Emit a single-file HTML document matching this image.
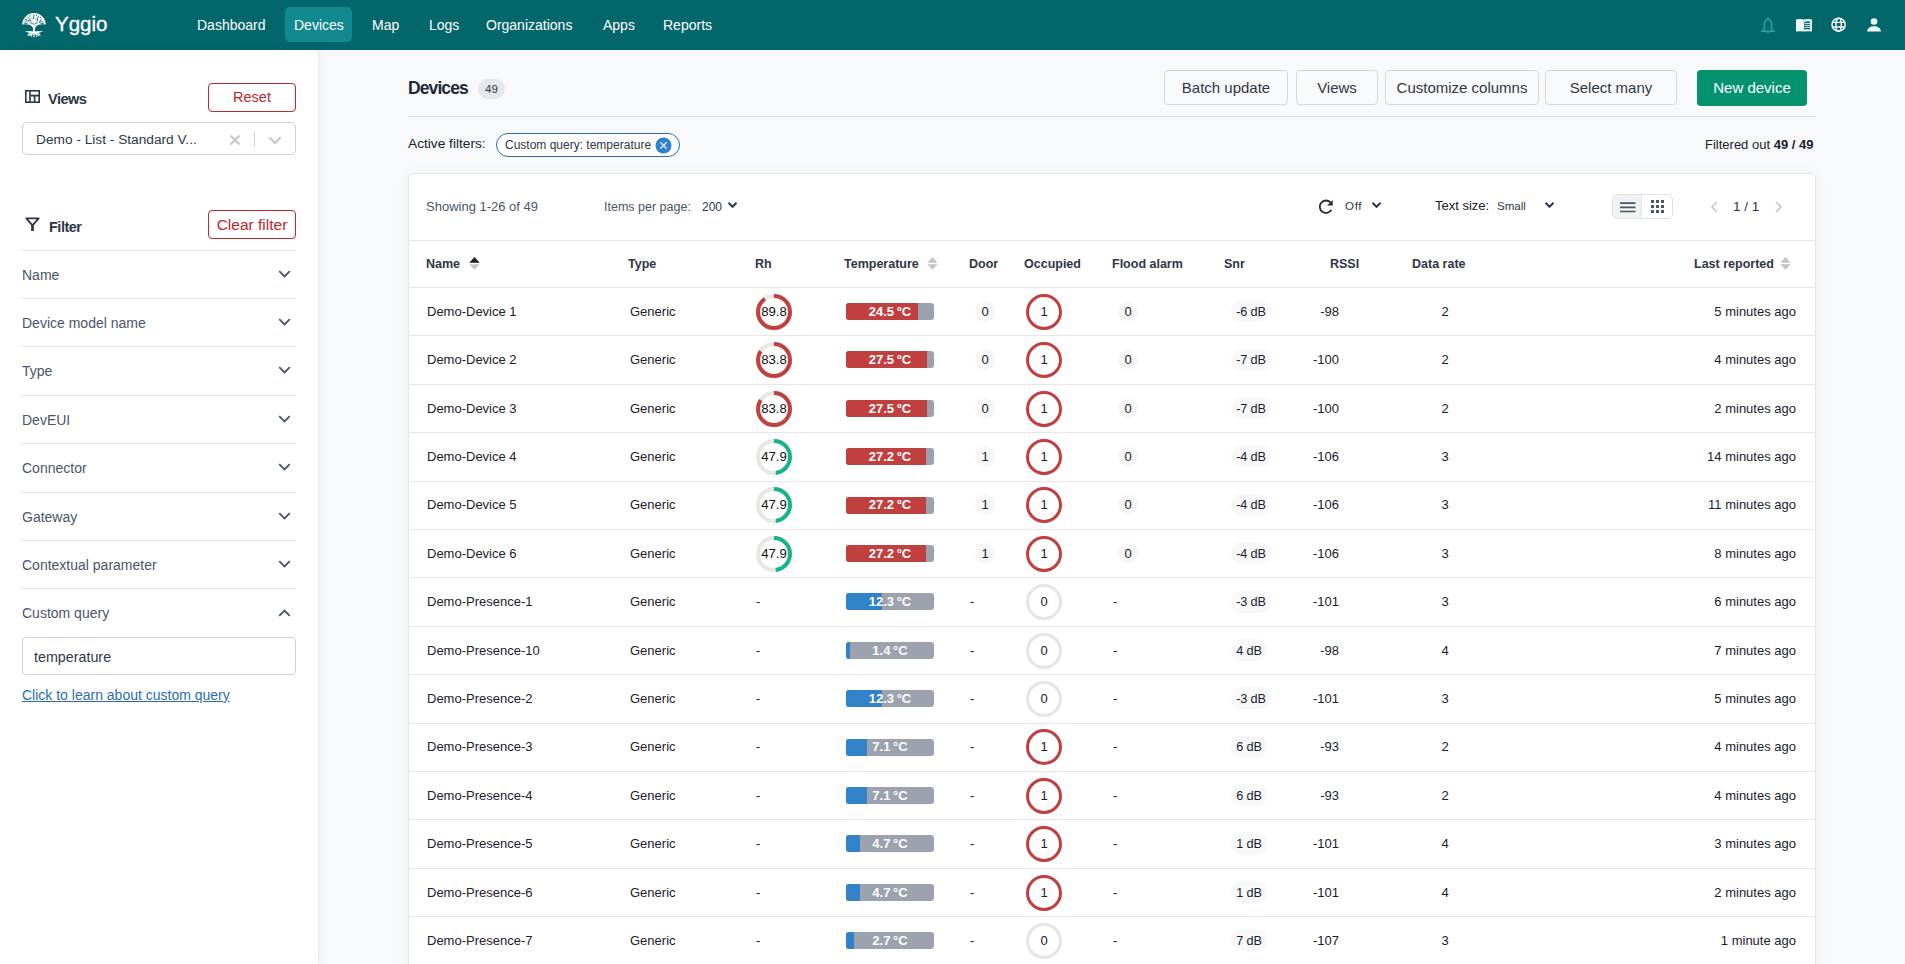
<!DOCTYPE html><html><head><meta charset="utf-8"><style>
*{box-sizing:border-box;margin:0;padding:0}
html,body{width:1905px;height:964px;overflow:hidden;font-family:"Liberation Sans",sans-serif;background:#f8f9fb;color:#1a202c}
.abs{position:absolute}
.t{position:absolute;white-space:nowrap}
#hdr{position:absolute;left:0;top:0;width:1905px;height:50px;background:#03666b}
.nav{position:absolute;top:17px;height:16px;line-height:16px;font-size:14px;color:#fff;white-space:nowrap}
.navact{position:absolute;left:285px;top:7px;width:67px;height:35px;background:#12898e;border-radius:5px}
#side{position:absolute;left:0;top:50px;width:319px;height:914px;background:#fff;border-right:1px solid #e8eaed;box-shadow:3px 0 10px rgba(0,0,0,.035)}
.btnred{position:absolute;left:208px;width:88px;height:28.5px;border:1.4px solid #b52a2a;border-radius:4px;color:#b52a2a;font-size:14.5px;text-align:center;line-height:27px;background:#fff;white-space:nowrap}
.fl{position:absolute;left:22px;width:274px;height:1px;background:#e2e5ea}
.fi{position:absolute;left:22px;font-size:14px;color:#4a5568;white-space:nowrap;line-height:16px}
.wbtn{position:absolute;top:70px;height:35px;border:1px solid #d3d7de;border-radius:4px;background:#f9fafb;font-size:15px;color:#2d3748;text-align:center;line-height:33px;white-space:nowrap}
#card{position:absolute;left:408px;top:173px;width:1408px;height:830px;background:#fff;border:1px solid #e3e5e9;border-radius:6px;box-shadow:0 0 14px rgba(0,0,0,.045)}
.th{position:absolute;top:256px;font-size:12.5px;font-weight:bold;color:#2d3748;white-space:nowrap;line-height:16px}
.rl{position:absolute;left:409px;width:1406px;height:1px;background:#e6e8ec}
.c{position:absolute;font-size:13px;color:#1a202c;white-space:nowrap;line-height:16px}
</style></head><body>
<div id="hdr">
<svg class="abs" style="left:21px;top:12px" width="26" height="26" viewBox="0 0 26 26"><g fill="#fff">
<path d="M1.2 12.6 A11.8 11.6 0 0 1 24.8 12.6 Q21 11.6 17.5 12.8 Q15.5 13.6 14.6 15 L11.4 15 Q10.5 13.6 8.5 12.8 Q5 11.6 1.2 12.6 Z"/>
<path d="M11.2 14 Q12.4 16.5 12 19.6 L10.8 20.8 L15.2 20.8 L14 19.6 Q13.6 16.5 14.8 14 Z"/>
<path d="M3.6 19.4 Q8.5 18.8 13 19.4 Q17.5 18.8 22.4 19.4 Q18 20.9 13 21.4 Q8 20.9 3.6 19.4 Z"/>
</g><g fill="none" stroke="#fff" stroke-width="1.1"><path d="M12.2 20.5 L9.8 24.6 M13 20.5 L13 25.2 M13.8 20.5 L16.2 24.6 M9 20.5 L6.6 23.6 M17 20.5 L19.4 23.6 M11 21 L8 23.6 M15 21 L18 23.6"/>
</g><g fill="none" stroke="#03666b" stroke-width="0.9">
<path d="M4 10 Q6 8 8.5 8.6 M6.5 5 Q9 6.5 10 9.5 M13 2.5 L12.6 7 M17.5 4.2 Q16 7 16.3 9.5 M20.5 7 Q18.5 8.6 19 11 M9.5 11.2 Q11.5 10 12.5 12.5 M16.5 11.2 Q14.5 10 13.5 12.5 M3 12 Q5.5 10.8 6.5 11.7 M23 12 Q20.5 10.8 19.5 11.7"/>
</g><g fill="#03666b"><circle cx="5" cy="7.5" r="0.7"/><circle cx="9" cy="4" r="0.7"/><circle cx="15.5" cy="3.2" r="0.6"/><circle cx="21" cy="9.5" r="0.7"/><circle cx="8" cy="10" r="0.6"/><circle cx="18" cy="10" r="0.6"/><circle cx="11" cy="6.5" r="0.6"/><circle cx="15" cy="7" r="0.6"/><circle cx="3" cy="10" r="0.5"/><circle cx="19.5" cy="5.5" r="0.6"/>
</g></svg>
<div class="t" style="left:55px;top:11px;font-size:20.5px;line-height:26px;color:#fff;-webkit-text-stroke:0.35px #fff">Yggio</div>
<div class="navact"></div>
<div class="nav" style="left:197px">Dashboard</div>
<div class="nav" style="left:294px">Devices</div>
<div class="nav" style="left:372px">Map</div>
<div class="nav" style="left:429px">Logs</div>
<div class="nav" style="left:486px">Organizations</div>
<div class="nav" style="left:603px">Apps</div>
<div class="nav" style="left:663px">Reports</div>
<svg class="abs" style="left:1760px;top:16px" width="16" height="18" viewBox="0 0 16 18">
<path fill="none" stroke="#23a0a6" stroke-width="1.6" d="M8 3.1 Q4.4 3.4 4.4 8.2 L4.4 13.5 L2.4 15.2 L13.6 15.2 L11.6 13.5 L11.6 8.2 Q11.6 3.4 8 3.1 Z"/>
<path fill="#23a0a6" d="M7.15 1.2h1.7v2.1h-1.7z M6.7 16.2h2.6v1.1h-2.6z"/></svg>
<svg class="abs" style="left:1795px;top:18px" width="18" height="15" viewBox="0 0 18 15">
<path fill="#eefafa" d="M1 1.5 Q4.9 0.5 8.9 1.5 Q12.9 0.5 17 1.5 L17 13.6 Q12.9 12.7 8.9 13.6 Q4.9 12.7 1 13.6 Z"/>
<path fill="#03666b" d="M9.1 11.6 L9.1 4.1 Q12 2.7 15.1 3.5 L15.1 11.6 Q12 11 9.1 11.6 Z"/>
<path fill="none" stroke="#eefafa" stroke-width="0.9" d="M9.6 5.4 H15.1 M9.6 7.4 H15.1 M9.6 9.4 H15.1"/></svg>
<svg class="abs" style="left:1830px;top:16px" width="17" height="17" viewBox="0 0 17 17">
<g fill="none" stroke="#fff" stroke-width="1.4"><circle cx="8.6" cy="8.7" r="6.6"/><ellipse cx="8.6" cy="8.7" rx="2.7" ry="6.6"/><path d="M2.2 6.4H15M2.2 11H15"/></g></svg>
<svg class="abs" style="left:1866px;top:17px" width="16" height="16" viewBox="0 0 16 16">
<g fill="#eefafa"><circle cx="8" cy="4.5" r="3.3"/><path d="M1 14.6 Q1.6 9.4 8 9.3 Q14.4 9.4 15 14.6 Z"/></g></svg>
</div>
<div id="side"></div>
<svg class="abs" style="left:25px;top:90px" width="15" height="13" viewBox="0 0 15 13">
<g fill="none" stroke="#2d3748" stroke-width="1.6"><rect x="0.8" y="0.8" width="13.4" height="11.4"/><path d="M5 0.8V12.2M5 5.6H14.2M9.6 5.6V12.2"/></g></svg>
<div class="t" style="left:48px;top:90.5px;font-size:14.5px;font-weight:bold;color:#2d3748;line-height:16px;letter-spacing:-0.5px">Views</div>
<div class="btnred" style="top:83px">Reset</div>
<div class="abs" style="left:22px;top:122px;width:274px;height:33px;border:1px solid #cdd2d9;border-radius:5px;background:#fff"></div>
<div class="t" style="left:36px;top:132px;font-size:13.7px;color:#2d3748;line-height:16px">Demo - List - Standard V...</div>
<svg class="abs" style="left:229px;top:134px" width="12" height="12" viewBox="0 0 12 12"><path d="M1.5 1.5L10.5 10.5M10.5 1.5L1.5 10.5" stroke="#c7c7c7" stroke-width="2.2"/></svg>
<div class="abs" style="left:254px;top:132px;width:1px;height:15px;background:#cfcfcf"></div>
<svg class="abs" style="left:268px;top:136px" width="14" height="9" viewBox="0 0 14 9"><path d="M1.5 1.5L7 7L12.5 1.5" fill="none" stroke="#c7c7c7" stroke-width="2.2"/></svg>
<svg class="abs" style="left:25px;top:216px" width="15" height="16" viewBox="0 0 15 16"><path d="M1.3 2.3H13.7L7.5 9.4Z" fill="none" stroke="#2d3748" stroke-width="1.8" stroke-linejoin="round"/><rect x="6.15" y="9" width="2.7" height="6" fill="#2d3748"/></svg>
<div class="t" style="left:49px;top:219px;font-size:14.5px;font-weight:bold;color:#2d3748;line-height:16px;letter-spacing:-0.5px">Filter</div>
<div class="btnred" style="top:210px;font-size:15.5px">Clear filter</div>
<div class="fl" style="top:250px"></div>
<div class="fi" style="top:267px">Name</div>
<svg class="abs" style="left:278px;top:270px" width="13" height="8" viewBox="0 0 13 8"><path d="M1.2 1.2L6.5 6.5L11.8 1.2" fill="none" stroke="#4a5568" stroke-width="1.8"/></svg>
<div class="fl" style="top:298px"></div>
<div class="fi" style="top:315px">Device model name</div>
<svg class="abs" style="left:278px;top:318px" width="13" height="8" viewBox="0 0 13 8"><path d="M1.2 1.2L6.5 6.5L11.8 1.2" fill="none" stroke="#4a5568" stroke-width="1.8"/></svg>
<div class="fl" style="top:346px"></div>
<div class="fi" style="top:363px">Type</div>
<svg class="abs" style="left:278px;top:366px" width="13" height="8" viewBox="0 0 13 8"><path d="M1.2 1.2L6.5 6.5L11.8 1.2" fill="none" stroke="#4a5568" stroke-width="1.8"/></svg>
<div class="fl" style="top:395px"></div>
<div class="fi" style="top:412px">DevEUI</div>
<svg class="abs" style="left:278px;top:415px" width="13" height="8" viewBox="0 0 13 8"><path d="M1.2 1.2L6.5 6.5L11.8 1.2" fill="none" stroke="#4a5568" stroke-width="1.8"/></svg>
<div class="fl" style="top:443px"></div>
<div class="fi" style="top:460px">Connector</div>
<svg class="abs" style="left:278px;top:463px" width="13" height="8" viewBox="0 0 13 8"><path d="M1.2 1.2L6.5 6.5L11.8 1.2" fill="none" stroke="#4a5568" stroke-width="1.8"/></svg>
<div class="fl" style="top:492px"></div>
<div class="fi" style="top:509px">Gateway</div>
<svg class="abs" style="left:278px;top:512px" width="13" height="8" viewBox="0 0 13 8"><path d="M1.2 1.2L6.5 6.5L11.8 1.2" fill="none" stroke="#4a5568" stroke-width="1.8"/></svg>
<div class="fl" style="top:540px"></div>
<div class="fi" style="top:557px">Contextual parameter</div>
<svg class="abs" style="left:278px;top:560px" width="13" height="8" viewBox="0 0 13 8"><path d="M1.2 1.2L6.5 6.5L11.8 1.2" fill="none" stroke="#4a5568" stroke-width="1.8"/></svg>
<div class="fl" style="top:588px"></div>
<div class="fi" style="top:605px">Custom query</div>
<svg class="abs" style="left:278px;top:609px" width="13" height="8" viewBox="0 0 13 8"><path d="M1.2 6.8L6.5 1.5L11.8 6.8" fill="none" stroke="#4a5568" stroke-width="1.8"/></svg>
<div class="abs" style="left:22px;top:637px;width:274px;height:38px;border:1px solid #cdd2d9;border-radius:4px;background:#fff"></div>
<div class="t" style="left:34px;top:649px;font-size:14.3px;color:#2d3748;line-height:16px">temperature</div>
<div class="t" style="left:22px;top:687px;font-size:14px;color:#2b6cb0;line-height:16px;text-decoration:underline">Click to learn about custom query</div>
<div class="t" style="left:408px;top:78.5px;font-size:17.5px;font-weight:bold;color:#1f2937;line-height:18px;letter-spacing:-0.9px">Devices</div>
<div class="abs" style="left:478px;top:79px;width:27px;height:20px;border-radius:10px;background:#e6e7ea;font-size:11.5px;color:#2d3748;text-align:center;line-height:20px">49</div>
<div class="wbtn" style="left:1164px;width:124px">Batch update</div>
<div class="wbtn" style="left:1296px;width:82px">Views</div>
<div class="wbtn" style="left:1385px;width:154px">Customize columns</div>
<div class="wbtn" style="left:1545px;width:132px">Select many</div>
<div class="abs" style="left:1697px;top:70px;width:110px;height:36px;background:#05926f;border-radius:4px;color:#fff;font-size:15px;text-align:center;line-height:35px">New device</div>
<div class="abs" style="left:408px;top:116px;width:1408px;height:1px;background:#d5d9e0"></div>
<div class="t" style="left:408px;top:136px;font-size:13.7px;color:#1a202c;line-height:16px">Active filters:</div>
<div class="abs" style="left:496px;top:133px;width:184px;height:24px;border:1.5px solid #2b6cb0;border-radius:12px;background:#fff"></div>
<div class="t" style="left:505px;top:137px;font-size:12px;color:#2d3748;line-height:16px">Custom query: temperature</div>
<svg class="abs" style="left:655px;top:137px" width="17" height="17" viewBox="0 0 17 17"><circle cx="8.5" cy="8.5" r="8" fill="#3182ce"/><path d="M5.4 5.4L11.6 11.6M11.6 5.4L5.4 11.6" stroke="#fff" stroke-width="1.3"/></svg>
<div class="t" style="left:1705px;top:137px;font-size:13px;color:#1a202c;line-height:16px">Filtered out <b>49 / 49</b></div>
<div id="card"></div>
<div class="t" style="left:426px;top:199px;font-size:13px;color:#4a5568;line-height:16px">Showing 1-26 of 49</div>
<div class="t" style="left:604px;top:199px;font-size:12.5px;color:#4a5568;line-height:16px">Items per page:</div>
<div class="t" style="left:702px;top:199px;font-size:12px;color:#2d3748;line-height:16px">200</div>
<svg class="abs" style="left:727px;top:201px" width="11" height="8" viewBox="0 0 11 8"><path d="M1.5 1.8L5.5 5.8L9.5 1.8" fill="none" stroke="#2d3748" stroke-width="2"/></svg>
<svg class="abs" style="left:1317px;top:198px" width="17" height="17" viewBox="0 0 17 17"><path d="M13.38 4.32A6.2 6.2 0 1 0 14.37 11.8" fill="none" stroke="#1f2937" stroke-width="1.8"/><path d="M10.2 7.6L15.7 2.1L15.7 7.6Z" fill="#1f2937"/></svg>
<div class="t" style="left:1345px;top:198px;font-size:11.5px;color:#2d3748;line-height:16px;letter-spacing:0.7px">Off</div>
<svg class="abs" style="left:1371px;top:201px" width="11" height="8" viewBox="0 0 11 8"><path d="M1.5 1.8L5.5 5.8L9.5 1.8" fill="none" stroke="#2d3748" stroke-width="2"/></svg>
<div class="t" style="left:1435px;top:198px;font-size:13px;color:#1a202c;line-height:16px">Text size:</div>
<div class="t" style="left:1497px;top:198px;font-size:11.5px;color:#2d3748;line-height:16px">Small</div>
<svg class="abs" style="left:1544px;top:201px" width="11" height="8" viewBox="0 0 11 8"><path d="M1.5 1.8L5.5 5.8L9.5 1.8" fill="none" stroke="#2d3748" stroke-width="2"/></svg>
<div class="abs" style="left:1612px;top:194px;width:61px;height:25px;border:1px solid #dde0e5;border-radius:5px;background:#fff;overflow:hidden"><div style="position:absolute;left:0;top:0;width:29px;height:25px;background:#f1f2f4;border-right:1px solid #e2e4e8"></div></div>
<svg class="abs" style="left:1620px;top:202px" width="16" height="11" viewBox="0 0 16 11"><path d="M0 1.2H15.5M0 5.3H15.5M0 9.5H15.5" stroke="#4a5568" stroke-width="1.7"/></svg>
<svg class="abs" style="left:1651px;top:200px" width="14" height="13" viewBox="0 0 14 13"><g fill="#4a5568"><rect x="0" y="0" width="3" height="3"/><rect x="5" y="0" width="3" height="3"/><rect x="10" y="0" width="3" height="3"/><rect x="0" y="5" width="3" height="3"/><rect x="5" y="5" width="3" height="3"/><rect x="10" y="5" width="3" height="3"/><rect x="0" y="10" width="3" height="3"/><rect x="5" y="10" width="3" height="3"/><rect x="10" y="10" width="3" height="3"/></g></svg>
<svg class="abs" style="left:1710px;top:201px" width="9" height="12" viewBox="0 0 9 12"><path d="M7 1L2 6L7 11" fill="none" stroke="#c3c7ce" stroke-width="1.6"/></svg>
<div class="t" style="left:1733px;top:199px;font-size:13.5px;color:#2d3748;line-height:16px">1 / 1</div>
<svg class="abs" style="left:1774px;top:201px" width="9" height="12" viewBox="0 0 9 12"><path d="M2 1L7 6L2 11" fill="none" stroke="#c3c7ce" stroke-width="1.6"/></svg>
<div class="rl" style="top:240px"></div>
<div class="th" style="left:426px">Name</div>
<div class="th" style="left:628px">Type</div>
<div class="th" style="left:755px">Rh</div>
<div class="th" style="left:844px">Temperature</div>
<div class="th" style="left:969px">Door</div>
<div class="th" style="left:1024px">Occupied</div>
<div class="th" style="left:1112px">Flood alarm</div>
<div class="th" style="left:1224px">Snr</div>
<div class="th" style="left:1330px">RSSI</div>
<div class="th" style="left:1412px">Data rate</div>
<div class="th" style="left:1694px">Last reported</div>
<svg class="abs" style="left:469px;top:257px" width="11" height="13" viewBox="0 0 11 13"><path d="M0.3 5.8L5.5 0L10.7 5.8Z" fill="#161b22"/><path d="M0.3 7.3L5.5 12.8L10.7 7.3Z" fill="#c4c4c4"/></svg>
<svg class="abs" style="left:927px;top:257px" width="11" height="13" viewBox="0 0 11 13"><path d="M0.3 5.8L5.5 0L10.7 5.8Z" fill="#c4c4c4"/><path d="M0.3 7.3L5.5 12.8L10.7 7.3Z" fill="#c4c4c4"/></svg>
<svg class="abs" style="left:1780px;top:257px" width="11" height="13" viewBox="0 0 11 13"><path d="M0.3 5.8L5.5 0L10.7 5.8Z" fill="#c4c4c4"/><path d="M0.3 7.3L5.5 12.8L10.7 7.3Z" fill="#c4c4c4"/></svg>
<div class="rl" style="top:287px"></div>
<div class="c" style="left:427px;top:303.7px">Demo-Device 1</div>
<div class="c" style="left:630px;top:303.7px">Generic</div>
<svg class="abs" style="left:756px;top:293.7px" width="36" height="36" viewBox="0 0 36 36"><circle cx="18" cy="18" r="16" fill="none" stroke="#e9e7e4" stroke-width="4"/><circle cx="18" cy="18" r="16" fill="none" stroke="#c03f3f" stroke-width="4" stroke-dasharray="90.28 100.53" transform="rotate(-90 18 18)"/></svg>
<div class="c" style="left:756px;width:36px;text-align:center;top:303.7px;font-size:13.2px;color:#111">89.8</div>
<div class="abs" style="left:846px;top:302.9px;width:88px;height:17px;border-radius:3px;background:#9ca3af;overflow:hidden"><div style="width:71.9px;height:17px;background:#c03f3f"></div></div>
<div class="c" style="left:846px;width:88px;text-align:center;top:303.7px;font-size:13px;font-weight:bold;color:#fff;letter-spacing:0px">24.5&#8201;°C</div>
<div class="abs" style="left:975px;top:300.7px;width:20px;height:21px;border-radius:10px;background:#f6f7f9"></div>
<div class="c" style="left:975px;width:20px;text-align:center;top:303.7px">0</div>
<div class="abs" style="left:1026px;top:293.7px;width:36px;height:36px;border-radius:18px;border:3.8px solid #c03f3f"></div>
<div class="c" style="left:1026px;width:36px;text-align:center;top:303.7px">1</div>
<div class="abs" style="left:1118px;top:300.7px;width:20px;height:21px;border-radius:10px;background:#f6f7f9"></div>
<div class="c" style="left:1118px;width:20px;text-align:center;top:303.7px">0</div>
<div class="abs" style="left:1231px;top:300.2px;width:40px;height:22px;border-radius:11px;background:#f7f8fa"></div>
<div class="c" style="left:1231px;width:40px;text-align:center;top:303.7px;font-size:12.7px;letter-spacing:-0.2px">-6 dB</div>
<div class="c" style="left:1289px;width:50px;text-align:right;top:303.7px">-98</div>
<div class="c" style="left:1425px;width:40px;text-align:center;top:303.7px">2</div>
<div class="c" style="left:1596px;width:200px;text-align:right;top:303.7px">5 minutes ago</div>
<div class="rl" style="top:335px"></div>
<div class="c" style="left:427px;top:352.1px">Demo-Device 2</div>
<div class="c" style="left:630px;top:352.1px">Generic</div>
<svg class="abs" style="left:756px;top:342.1px" width="36" height="36" viewBox="0 0 36 36"><circle cx="18" cy="18" r="16" fill="none" stroke="#e9e7e4" stroke-width="4"/><circle cx="18" cy="18" r="16" fill="none" stroke="#c03f3f" stroke-width="4" stroke-dasharray="84.24 100.53" transform="rotate(-90 18 18)"/></svg>
<div class="c" style="left:756px;width:36px;text-align:center;top:352.1px;font-size:13.2px;color:#111">83.8</div>
<div class="abs" style="left:846px;top:351.3px;width:88px;height:17px;border-radius:3px;background:#9ca3af;overflow:hidden"><div style="width:80.7px;height:17px;background:#c03f3f"></div></div>
<div class="c" style="left:846px;width:88px;text-align:center;top:352.1px;font-size:13px;font-weight:bold;color:#fff;letter-spacing:0px">27.5&#8201;°C</div>
<div class="abs" style="left:975px;top:349.1px;width:20px;height:21px;border-radius:10px;background:#f6f7f9"></div>
<div class="c" style="left:975px;width:20px;text-align:center;top:352.1px">0</div>
<div class="abs" style="left:1026px;top:342.1px;width:36px;height:36px;border-radius:18px;border:3.8px solid #c03f3f"></div>
<div class="c" style="left:1026px;width:36px;text-align:center;top:352.1px">1</div>
<div class="abs" style="left:1118px;top:349.1px;width:20px;height:21px;border-radius:10px;background:#f6f7f9"></div>
<div class="c" style="left:1118px;width:20px;text-align:center;top:352.1px">0</div>
<div class="abs" style="left:1231px;top:348.6px;width:40px;height:22px;border-radius:11px;background:#f7f8fa"></div>
<div class="c" style="left:1231px;width:40px;text-align:center;top:352.1px;font-size:12.7px;letter-spacing:-0.2px">-7 dB</div>
<div class="c" style="left:1289px;width:50px;text-align:right;top:352.1px">-100</div>
<div class="c" style="left:1425px;width:40px;text-align:center;top:352.1px">2</div>
<div class="c" style="left:1596px;width:200px;text-align:right;top:352.1px">4 minutes ago</div>
<div class="rl" style="top:384px"></div>
<div class="c" style="left:427px;top:400.5px">Demo-Device 3</div>
<div class="c" style="left:630px;top:400.5px">Generic</div>
<svg class="abs" style="left:756px;top:390.5px" width="36" height="36" viewBox="0 0 36 36"><circle cx="18" cy="18" r="16" fill="none" stroke="#e9e7e4" stroke-width="4"/><circle cx="18" cy="18" r="16" fill="none" stroke="#c03f3f" stroke-width="4" stroke-dasharray="84.24 100.53" transform="rotate(-90 18 18)"/></svg>
<div class="c" style="left:756px;width:36px;text-align:center;top:400.5px;font-size:13.2px;color:#111">83.8</div>
<div class="abs" style="left:846px;top:399.7px;width:88px;height:17px;border-radius:3px;background:#9ca3af;overflow:hidden"><div style="width:80.7px;height:17px;background:#c03f3f"></div></div>
<div class="c" style="left:846px;width:88px;text-align:center;top:400.5px;font-size:13px;font-weight:bold;color:#fff;letter-spacing:0px">27.5&#8201;°C</div>
<div class="abs" style="left:975px;top:397.5px;width:20px;height:21px;border-radius:10px;background:#f6f7f9"></div>
<div class="c" style="left:975px;width:20px;text-align:center;top:400.5px">0</div>
<div class="abs" style="left:1026px;top:390.5px;width:36px;height:36px;border-radius:18px;border:3.8px solid #c03f3f"></div>
<div class="c" style="left:1026px;width:36px;text-align:center;top:400.5px">1</div>
<div class="abs" style="left:1118px;top:397.5px;width:20px;height:21px;border-radius:10px;background:#f6f7f9"></div>
<div class="c" style="left:1118px;width:20px;text-align:center;top:400.5px">0</div>
<div class="abs" style="left:1231px;top:397.0px;width:40px;height:22px;border-radius:11px;background:#f7f8fa"></div>
<div class="c" style="left:1231px;width:40px;text-align:center;top:400.5px;font-size:12.7px;letter-spacing:-0.2px">-7 dB</div>
<div class="c" style="left:1289px;width:50px;text-align:right;top:400.5px">-100</div>
<div class="c" style="left:1425px;width:40px;text-align:center;top:400.5px">2</div>
<div class="c" style="left:1596px;width:200px;text-align:right;top:400.5px">2 minutes ago</div>
<div class="rl" style="top:432px"></div>
<div class="c" style="left:427px;top:448.9px">Demo-Device 4</div>
<div class="c" style="left:630px;top:448.9px">Generic</div>
<svg class="abs" style="left:756px;top:438.9px" width="36" height="36" viewBox="0 0 36 36"><circle cx="18" cy="18" r="16" fill="none" stroke="#e9e7e4" stroke-width="4"/><circle cx="18" cy="18" r="16" fill="none" stroke="#17b38b" stroke-width="4" stroke-dasharray="48.15 100.53" transform="rotate(-90 18 18)"/></svg>
<div class="c" style="left:756px;width:36px;text-align:center;top:448.9px;font-size:13.2px;color:#111">47.9</div>
<div class="abs" style="left:846px;top:448.1px;width:88px;height:17px;border-radius:3px;background:#9ca3af;overflow:hidden"><div style="width:79.8px;height:17px;background:#c03f3f"></div></div>
<div class="c" style="left:846px;width:88px;text-align:center;top:448.9px;font-size:13px;font-weight:bold;color:#fff;letter-spacing:0px">27.2&#8201;°C</div>
<div class="abs" style="left:975px;top:445.9px;width:20px;height:21px;border-radius:10px;background:#f6f7f9"></div>
<div class="c" style="left:975px;width:20px;text-align:center;top:448.9px">1</div>
<div class="abs" style="left:1026px;top:438.9px;width:36px;height:36px;border-radius:18px;border:3.8px solid #c03f3f"></div>
<div class="c" style="left:1026px;width:36px;text-align:center;top:448.9px">1</div>
<div class="abs" style="left:1118px;top:445.9px;width:20px;height:21px;border-radius:10px;background:#f6f7f9"></div>
<div class="c" style="left:1118px;width:20px;text-align:center;top:448.9px">0</div>
<div class="abs" style="left:1231px;top:445.4px;width:40px;height:22px;border-radius:11px;background:#f7f8fa"></div>
<div class="c" style="left:1231px;width:40px;text-align:center;top:448.9px;font-size:12.7px;letter-spacing:-0.2px">-4 dB</div>
<div class="c" style="left:1289px;width:50px;text-align:right;top:448.9px">-106</div>
<div class="c" style="left:1425px;width:40px;text-align:center;top:448.9px">3</div>
<div class="c" style="left:1596px;width:200px;text-align:right;top:448.9px">14 minutes ago</div>
<div class="rl" style="top:481px"></div>
<div class="c" style="left:427px;top:497.3px">Demo-Device 5</div>
<div class="c" style="left:630px;top:497.3px">Generic</div>
<svg class="abs" style="left:756px;top:487.3px" width="36" height="36" viewBox="0 0 36 36"><circle cx="18" cy="18" r="16" fill="none" stroke="#e9e7e4" stroke-width="4"/><circle cx="18" cy="18" r="16" fill="none" stroke="#17b38b" stroke-width="4" stroke-dasharray="48.15 100.53" transform="rotate(-90 18 18)"/></svg>
<div class="c" style="left:756px;width:36px;text-align:center;top:497.3px;font-size:13.2px;color:#111">47.9</div>
<div class="abs" style="left:846px;top:496.5px;width:88px;height:17px;border-radius:3px;background:#9ca3af;overflow:hidden"><div style="width:79.8px;height:17px;background:#c03f3f"></div></div>
<div class="c" style="left:846px;width:88px;text-align:center;top:497.3px;font-size:13px;font-weight:bold;color:#fff;letter-spacing:0px">27.2&#8201;°C</div>
<div class="abs" style="left:975px;top:494.3px;width:20px;height:21px;border-radius:10px;background:#f6f7f9"></div>
<div class="c" style="left:975px;width:20px;text-align:center;top:497.3px">1</div>
<div class="abs" style="left:1026px;top:487.3px;width:36px;height:36px;border-radius:18px;border:3.8px solid #c03f3f"></div>
<div class="c" style="left:1026px;width:36px;text-align:center;top:497.3px">1</div>
<div class="abs" style="left:1118px;top:494.3px;width:20px;height:21px;border-radius:10px;background:#f6f7f9"></div>
<div class="c" style="left:1118px;width:20px;text-align:center;top:497.3px">0</div>
<div class="abs" style="left:1231px;top:493.8px;width:40px;height:22px;border-radius:11px;background:#f7f8fa"></div>
<div class="c" style="left:1231px;width:40px;text-align:center;top:497.3px;font-size:12.7px;letter-spacing:-0.2px">-4 dB</div>
<div class="c" style="left:1289px;width:50px;text-align:right;top:497.3px">-106</div>
<div class="c" style="left:1425px;width:40px;text-align:center;top:497.3px">3</div>
<div class="c" style="left:1596px;width:200px;text-align:right;top:497.3px">11 minutes ago</div>
<div class="rl" style="top:529px"></div>
<div class="c" style="left:427px;top:545.7px">Demo-Device 6</div>
<div class="c" style="left:630px;top:545.7px">Generic</div>
<svg class="abs" style="left:756px;top:535.7px" width="36" height="36" viewBox="0 0 36 36"><circle cx="18" cy="18" r="16" fill="none" stroke="#e9e7e4" stroke-width="4"/><circle cx="18" cy="18" r="16" fill="none" stroke="#17b38b" stroke-width="4" stroke-dasharray="48.15 100.53" transform="rotate(-90 18 18)"/></svg>
<div class="c" style="left:756px;width:36px;text-align:center;top:545.7px;font-size:13.2px;color:#111">47.9</div>
<div class="abs" style="left:846px;top:544.9px;width:88px;height:17px;border-radius:3px;background:#9ca3af;overflow:hidden"><div style="width:79.8px;height:17px;background:#c03f3f"></div></div>
<div class="c" style="left:846px;width:88px;text-align:center;top:545.7px;font-size:13px;font-weight:bold;color:#fff;letter-spacing:0px">27.2&#8201;°C</div>
<div class="abs" style="left:975px;top:542.7px;width:20px;height:21px;border-radius:10px;background:#f6f7f9"></div>
<div class="c" style="left:975px;width:20px;text-align:center;top:545.7px">1</div>
<div class="abs" style="left:1026px;top:535.7px;width:36px;height:36px;border-radius:18px;border:3.8px solid #c03f3f"></div>
<div class="c" style="left:1026px;width:36px;text-align:center;top:545.7px">1</div>
<div class="abs" style="left:1118px;top:542.7px;width:20px;height:21px;border-radius:10px;background:#f6f7f9"></div>
<div class="c" style="left:1118px;width:20px;text-align:center;top:545.7px">0</div>
<div class="abs" style="left:1231px;top:542.2px;width:40px;height:22px;border-radius:11px;background:#f7f8fa"></div>
<div class="c" style="left:1231px;width:40px;text-align:center;top:545.7px;font-size:12.7px;letter-spacing:-0.2px">-4 dB</div>
<div class="c" style="left:1289px;width:50px;text-align:right;top:545.7px">-106</div>
<div class="c" style="left:1425px;width:40px;text-align:center;top:545.7px">3</div>
<div class="c" style="left:1596px;width:200px;text-align:right;top:545.7px">8 minutes ago</div>
<div class="rl" style="top:577px"></div>
<div class="c" style="left:427px;top:594.1px">Demo-Presence-1</div>
<div class="c" style="left:630px;top:594.1px">Generic</div>
<div class="c" style="left:756px;top:594.1px">-</div>
<div class="abs" style="left:846px;top:593.3px;width:88px;height:17px;border-radius:3px;background:#9ca3af;overflow:hidden"><div style="width:36.1px;height:17px;background:#3182c8"></div></div>
<div class="c" style="left:846px;width:88px;text-align:center;top:594.1px;font-size:13px;font-weight:bold;color:#fff;letter-spacing:0px">12.3&#8201;°C</div>
<div class="c" style="left:970px;top:594.1px">-</div>
<div class="abs" style="left:1026px;top:584.1px;width:36px;height:36px;border-radius:18px;border:3.8px solid #e6e5e3"></div>
<div class="c" style="left:1026px;width:36px;text-align:center;top:594.1px">0</div>
<div class="c" style="left:1113px;top:594.1px">-</div>
<div class="abs" style="left:1231px;top:590.6px;width:40px;height:22px;border-radius:11px;background:#f7f8fa"></div>
<div class="c" style="left:1231px;width:40px;text-align:center;top:594.1px;font-size:12.7px;letter-spacing:-0.2px">-3 dB</div>
<div class="c" style="left:1289px;width:50px;text-align:right;top:594.1px">-101</div>
<div class="c" style="left:1425px;width:40px;text-align:center;top:594.1px">3</div>
<div class="c" style="left:1596px;width:200px;text-align:right;top:594.1px">6 minutes ago</div>
<div class="rl" style="top:626px"></div>
<div class="c" style="left:427px;top:642.5px">Demo-Presence-10</div>
<div class="c" style="left:630px;top:642.5px">Generic</div>
<div class="c" style="left:756px;top:642.5px">-</div>
<div class="abs" style="left:846px;top:641.7px;width:88px;height:17px;border-radius:3px;background:#9ca3af;overflow:hidden"><div style="width:4.1px;height:17px;background:#3182c8"></div></div>
<div class="c" style="left:846px;width:88px;text-align:center;top:642.5px;font-size:13px;font-weight:bold;color:#fff;letter-spacing:0px">1.4&#8201;°C</div>
<div class="c" style="left:970px;top:642.5px">-</div>
<div class="abs" style="left:1026px;top:632.5px;width:36px;height:36px;border-radius:18px;border:3.8px solid #e6e5e3"></div>
<div class="c" style="left:1026px;width:36px;text-align:center;top:642.5px">0</div>
<div class="c" style="left:1113px;top:642.5px">-</div>
<div class="abs" style="left:1231px;top:639.0px;width:36px;height:22px;border-radius:11px;background:#f7f8fa"></div>
<div class="c" style="left:1231px;width:36px;text-align:center;top:642.5px;font-size:12.7px;letter-spacing:-0.2px">4 dB</div>
<div class="c" style="left:1289px;width:50px;text-align:right;top:642.5px">-98</div>
<div class="c" style="left:1425px;width:40px;text-align:center;top:642.5px">4</div>
<div class="c" style="left:1596px;width:200px;text-align:right;top:642.5px">7 minutes ago</div>
<div class="rl" style="top:674px"></div>
<div class="c" style="left:427px;top:690.9px">Demo-Presence-2</div>
<div class="c" style="left:630px;top:690.9px">Generic</div>
<div class="c" style="left:756px;top:690.9px">-</div>
<div class="abs" style="left:846px;top:690.1px;width:88px;height:17px;border-radius:3px;background:#9ca3af;overflow:hidden"><div style="width:36.1px;height:17px;background:#3182c8"></div></div>
<div class="c" style="left:846px;width:88px;text-align:center;top:690.9px;font-size:13px;font-weight:bold;color:#fff;letter-spacing:0px">12.3&#8201;°C</div>
<div class="c" style="left:970px;top:690.9px">-</div>
<div class="abs" style="left:1026px;top:680.9px;width:36px;height:36px;border-radius:18px;border:3.8px solid #e6e5e3"></div>
<div class="c" style="left:1026px;width:36px;text-align:center;top:690.9px">0</div>
<div class="c" style="left:1113px;top:690.9px">-</div>
<div class="abs" style="left:1231px;top:687.4px;width:40px;height:22px;border-radius:11px;background:#f7f8fa"></div>
<div class="c" style="left:1231px;width:40px;text-align:center;top:690.9px;font-size:12.7px;letter-spacing:-0.2px">-3 dB</div>
<div class="c" style="left:1289px;width:50px;text-align:right;top:690.9px">-101</div>
<div class="c" style="left:1425px;width:40px;text-align:center;top:690.9px">3</div>
<div class="c" style="left:1596px;width:200px;text-align:right;top:690.9px">5 minutes ago</div>
<div class="rl" style="top:723px"></div>
<div class="c" style="left:427px;top:739.3px">Demo-Presence-3</div>
<div class="c" style="left:630px;top:739.3px">Generic</div>
<div class="c" style="left:756px;top:739.3px">-</div>
<div class="abs" style="left:846px;top:738.5px;width:88px;height:17px;border-radius:3px;background:#9ca3af;overflow:hidden"><div style="width:20.8px;height:17px;background:#3182c8"></div></div>
<div class="c" style="left:846px;width:88px;text-align:center;top:739.3px;font-size:13px;font-weight:bold;color:#fff;letter-spacing:0px">7.1&#8201;°C</div>
<div class="c" style="left:970px;top:739.3px">-</div>
<div class="abs" style="left:1026px;top:729.3px;width:36px;height:36px;border-radius:18px;border:3.8px solid #c03f3f"></div>
<div class="c" style="left:1026px;width:36px;text-align:center;top:739.3px">1</div>
<div class="c" style="left:1113px;top:739.3px">-</div>
<div class="abs" style="left:1231px;top:735.8px;width:36px;height:22px;border-radius:11px;background:#f7f8fa"></div>
<div class="c" style="left:1231px;width:36px;text-align:center;top:739.3px;font-size:12.7px;letter-spacing:-0.2px">6 dB</div>
<div class="c" style="left:1289px;width:50px;text-align:right;top:739.3px">-93</div>
<div class="c" style="left:1425px;width:40px;text-align:center;top:739.3px">2</div>
<div class="c" style="left:1596px;width:200px;text-align:right;top:739.3px">4 minutes ago</div>
<div class="rl" style="top:771px"></div>
<div class="c" style="left:427px;top:787.7px">Demo-Presence-4</div>
<div class="c" style="left:630px;top:787.7px">Generic</div>
<div class="c" style="left:756px;top:787.7px">-</div>
<div class="abs" style="left:846px;top:786.9px;width:88px;height:17px;border-radius:3px;background:#9ca3af;overflow:hidden"><div style="width:20.8px;height:17px;background:#3182c8"></div></div>
<div class="c" style="left:846px;width:88px;text-align:center;top:787.7px;font-size:13px;font-weight:bold;color:#fff;letter-spacing:0px">7.1&#8201;°C</div>
<div class="c" style="left:970px;top:787.7px">-</div>
<div class="abs" style="left:1026px;top:777.7px;width:36px;height:36px;border-radius:18px;border:3.8px solid #c03f3f"></div>
<div class="c" style="left:1026px;width:36px;text-align:center;top:787.7px">1</div>
<div class="c" style="left:1113px;top:787.7px">-</div>
<div class="abs" style="left:1231px;top:784.2px;width:36px;height:22px;border-radius:11px;background:#f7f8fa"></div>
<div class="c" style="left:1231px;width:36px;text-align:center;top:787.7px;font-size:12.7px;letter-spacing:-0.2px">6 dB</div>
<div class="c" style="left:1289px;width:50px;text-align:right;top:787.7px">-93</div>
<div class="c" style="left:1425px;width:40px;text-align:center;top:787.7px">2</div>
<div class="c" style="left:1596px;width:200px;text-align:right;top:787.7px">4 minutes ago</div>
<div class="rl" style="top:819px"></div>
<div class="c" style="left:427px;top:836.1px">Demo-Presence-5</div>
<div class="c" style="left:630px;top:836.1px">Generic</div>
<div class="c" style="left:756px;top:836.1px">-</div>
<div class="abs" style="left:846px;top:835.3px;width:88px;height:17px;border-radius:3px;background:#9ca3af;overflow:hidden"><div style="width:13.8px;height:17px;background:#3182c8"></div></div>
<div class="c" style="left:846px;width:88px;text-align:center;top:836.1px;font-size:13px;font-weight:bold;color:#fff;letter-spacing:0px">4.7&#8201;°C</div>
<div class="c" style="left:970px;top:836.1px">-</div>
<div class="abs" style="left:1026px;top:826.1px;width:36px;height:36px;border-radius:18px;border:3.8px solid #c03f3f"></div>
<div class="c" style="left:1026px;width:36px;text-align:center;top:836.1px">1</div>
<div class="c" style="left:1113px;top:836.1px">-</div>
<div class="abs" style="left:1231px;top:832.6px;width:36px;height:22px;border-radius:11px;background:#f7f8fa"></div>
<div class="c" style="left:1231px;width:36px;text-align:center;top:836.1px;font-size:12.7px;letter-spacing:-0.2px">1 dB</div>
<div class="c" style="left:1289px;width:50px;text-align:right;top:836.1px">-101</div>
<div class="c" style="left:1425px;width:40px;text-align:center;top:836.1px">4</div>
<div class="c" style="left:1596px;width:200px;text-align:right;top:836.1px">3 minutes ago</div>
<div class="rl" style="top:868px"></div>
<div class="c" style="left:427px;top:884.5px">Demo-Presence-6</div>
<div class="c" style="left:630px;top:884.5px">Generic</div>
<div class="c" style="left:756px;top:884.5px">-</div>
<div class="abs" style="left:846px;top:883.7px;width:88px;height:17px;border-radius:3px;background:#9ca3af;overflow:hidden"><div style="width:13.8px;height:17px;background:#3182c8"></div></div>
<div class="c" style="left:846px;width:88px;text-align:center;top:884.5px;font-size:13px;font-weight:bold;color:#fff;letter-spacing:0px">4.7&#8201;°C</div>
<div class="c" style="left:970px;top:884.5px">-</div>
<div class="abs" style="left:1026px;top:874.5px;width:36px;height:36px;border-radius:18px;border:3.8px solid #c03f3f"></div>
<div class="c" style="left:1026px;width:36px;text-align:center;top:884.5px">1</div>
<div class="c" style="left:1113px;top:884.5px">-</div>
<div class="abs" style="left:1231px;top:881.0px;width:36px;height:22px;border-radius:11px;background:#f7f8fa"></div>
<div class="c" style="left:1231px;width:36px;text-align:center;top:884.5px;font-size:12.7px;letter-spacing:-0.2px">1 dB</div>
<div class="c" style="left:1289px;width:50px;text-align:right;top:884.5px">-101</div>
<div class="c" style="left:1425px;width:40px;text-align:center;top:884.5px">4</div>
<div class="c" style="left:1596px;width:200px;text-align:right;top:884.5px">2 minutes ago</div>
<div class="rl" style="top:916px"></div>
<div class="c" style="left:427px;top:932.9px">Demo-Presence-7</div>
<div class="c" style="left:630px;top:932.9px">Generic</div>
<div class="c" style="left:756px;top:932.9px">-</div>
<div class="abs" style="left:846px;top:932.1px;width:88px;height:17px;border-radius:3px;background:#9ca3af;overflow:hidden"><div style="width:7.9px;height:17px;background:#3182c8"></div></div>
<div class="c" style="left:846px;width:88px;text-align:center;top:932.9px;font-size:13px;font-weight:bold;color:#fff;letter-spacing:0px">2.7&#8201;°C</div>
<div class="c" style="left:970px;top:932.9px">-</div>
<div class="abs" style="left:1026px;top:922.9px;width:36px;height:36px;border-radius:18px;border:3.8px solid #e6e5e3"></div>
<div class="c" style="left:1026px;width:36px;text-align:center;top:932.9px">0</div>
<div class="c" style="left:1113px;top:932.9px">-</div>
<div class="abs" style="left:1231px;top:929.4px;width:36px;height:22px;border-radius:11px;background:#f7f8fa"></div>
<div class="c" style="left:1231px;width:36px;text-align:center;top:932.9px;font-size:12.7px;letter-spacing:-0.2px">7 dB</div>
<div class="c" style="left:1289px;width:50px;text-align:right;top:932.9px">-107</div>
<div class="c" style="left:1425px;width:40px;text-align:center;top:932.9px">3</div>
<div class="c" style="left:1596px;width:200px;text-align:right;top:932.9px">1 minute ago</div>
</body></html>
